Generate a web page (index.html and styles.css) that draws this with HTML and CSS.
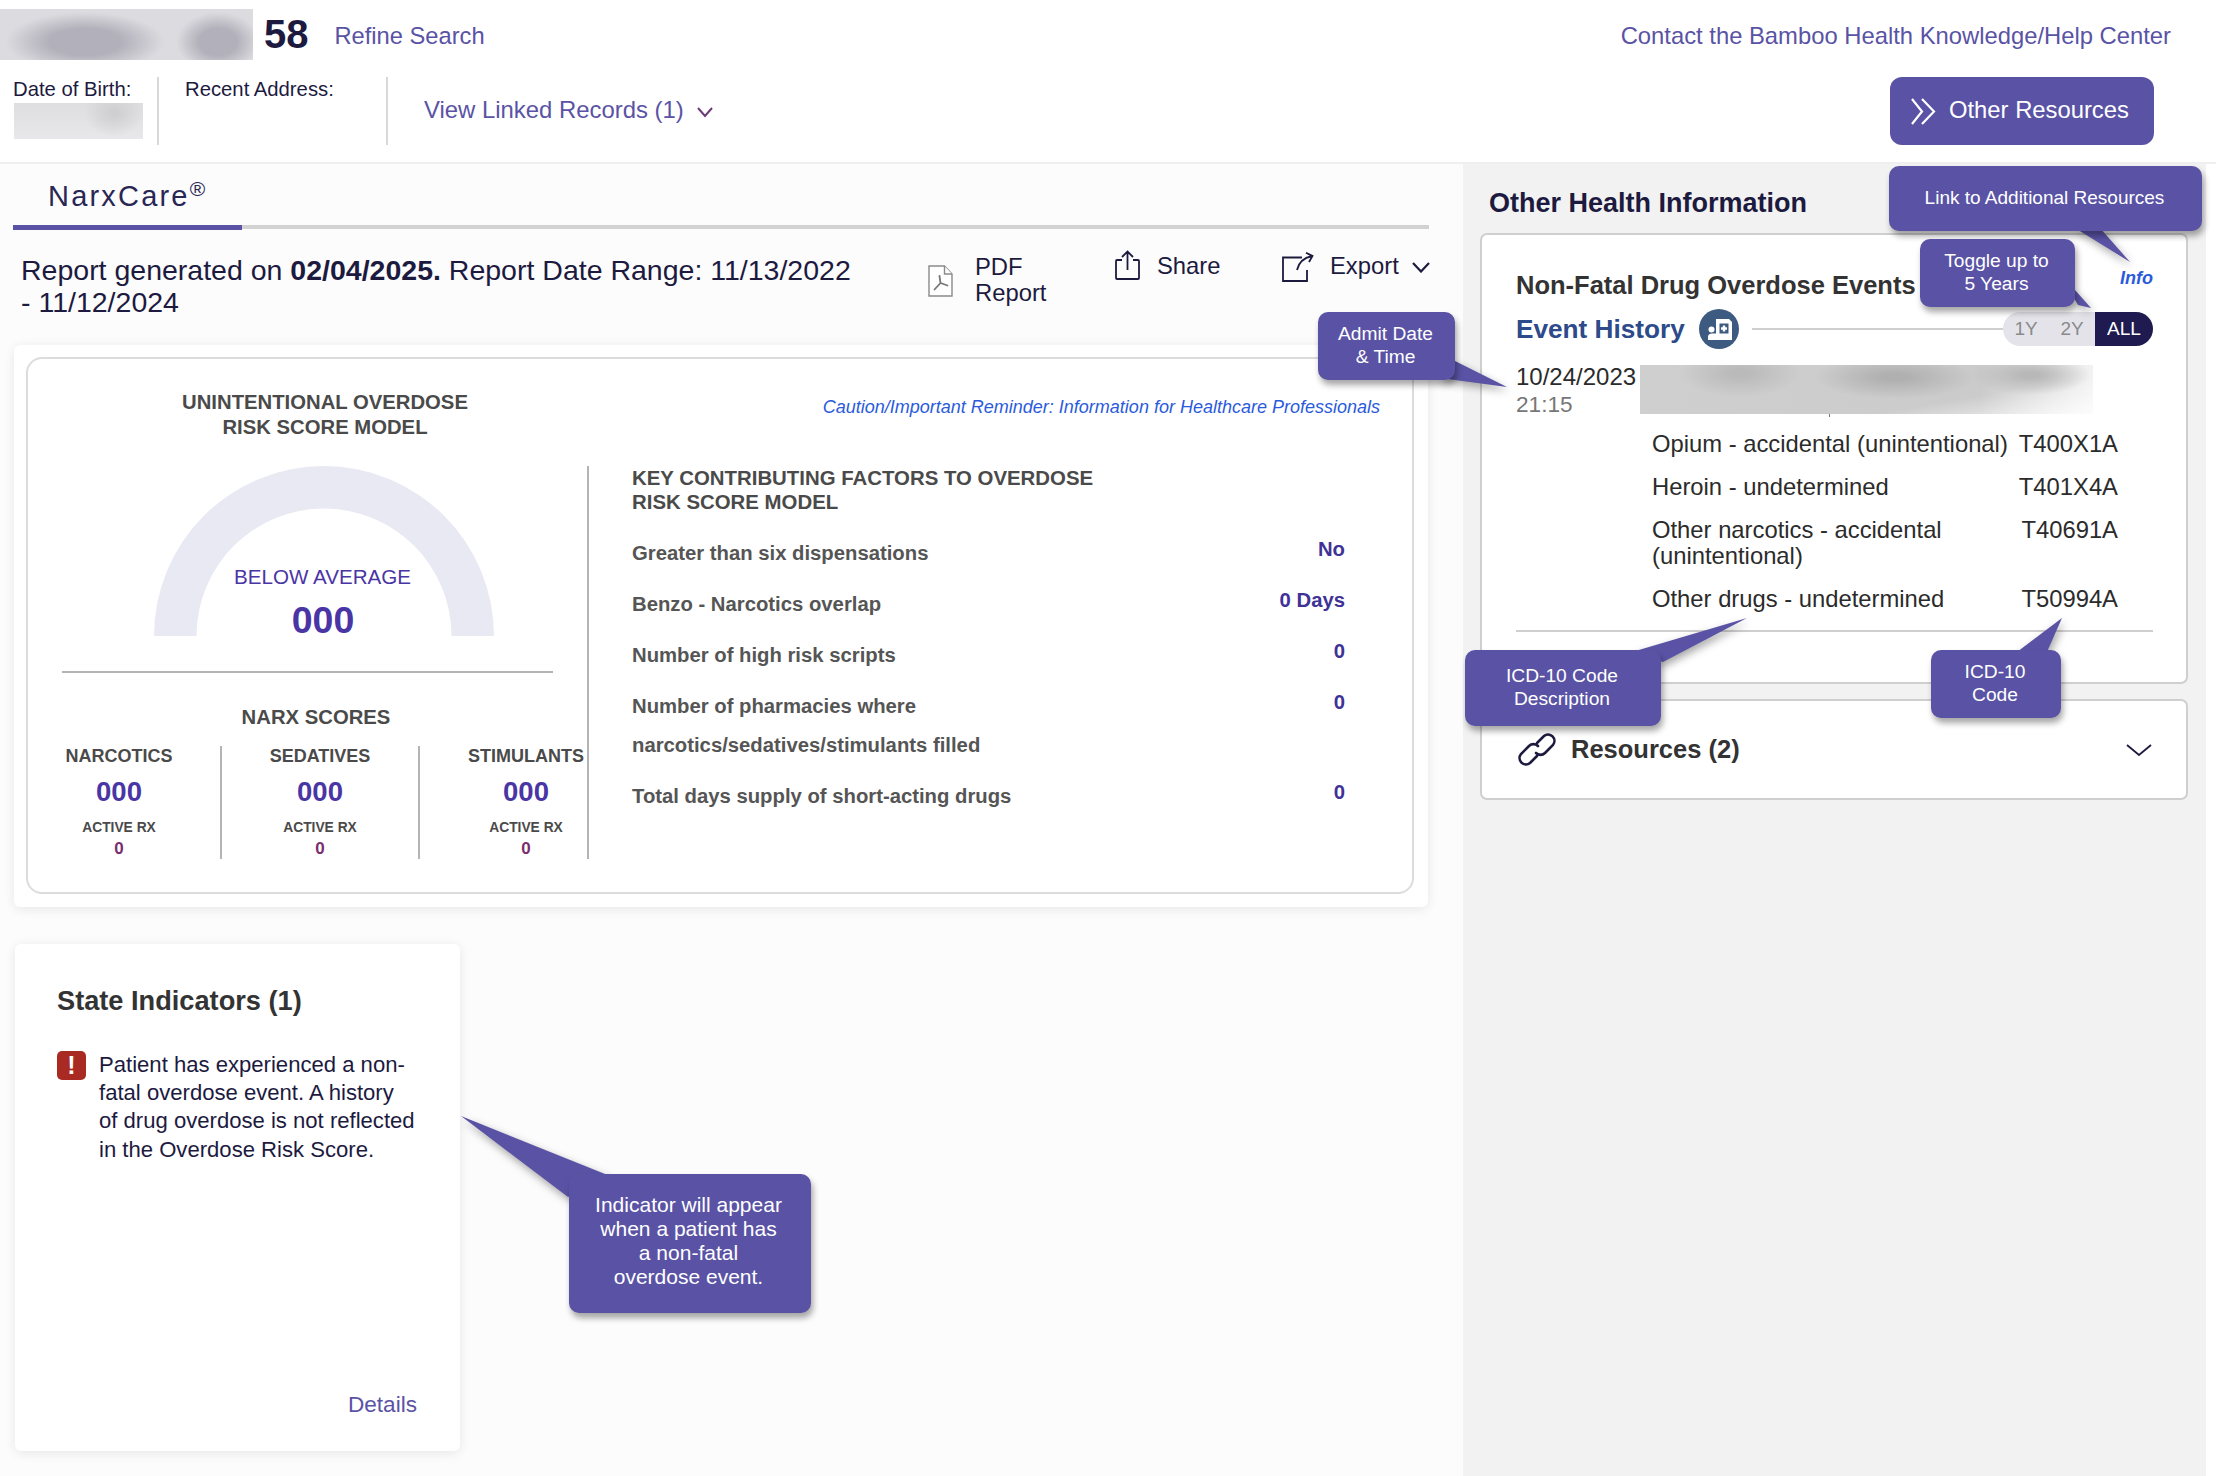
FILE: index.html
```html
<!DOCTYPE html>
<html lang="en">
<head>
<meta charset="utf-8">
<title>NarxCare</title>
<link rel="stylesheet" href="styles.css">
</head>
<body>
<div class="page">
  <header class="top">
    <div class="top-row">
      <div class="blur-name"></div>
      <span class="age">58</span>
      <a class="link refine">Refine Search</a>
      <a class="link contact">Contact the Bamboo Health Knowledge/Help Center</a>
    </div>
    <div class="info-row">
      <div class="info dob">
        <span>Date of Birth:</span>
        <div class="blur-dob"></div>
      </div>
      <div class="info addr"><span>Recent Address:</span></div>
      <a class="link linked">View Linked Records (1)
        <svg class="chev-linked" viewBox="0 0 18 12"><polyline points="2,2 9,10 16,2"/></svg>
      </a>
      <button class="res-btn">
        <svg class="dbl" viewBox="0 0 26 27"><polyline points="2,1 12,13.5 2,26"/><polyline points="12,1 24,13.5 12,26"/></svg>
        Other Resources
      </button>
    </div>
  </header>

  <main class="main">
    <section class="left">
      <div class="tabs"><span class="tab">NarxCare<sup>®</sup></span></div>
      <div class="report-row">
        <p class="report-text">Report generated on <b>02/04/2025.</b> Report Date Range: 11/13/2022 - 11/12/2024</p>
        <div class="action pdf">
          <svg class="ic-pdf" viewBox="0 0 25 32"><path class="doc" d="M1 1H16.500L24 9V31H1Z"/><path class="doc" d="M16.500 1V9H24"/><path class="acro" d="M6.500 24.500L12.500 18L11.500 11M12.500 18L19.500 20.500"/></svg>
          <span>PDF<br>Report</span>
        </div>
        <div class="action share">
          <svg class="ic-share" viewBox="0 0 26 31"><path d="M8 10H3A1 1 0 0 0 2 11V28A1 1 0 0 0 3 29H24A1 1 0 0 0 25 28V11A1 1 0 0 0 24 10H19"/><path d="M13.500 20V1.500M8 7L13.500 1.500L19 7"/></svg>
          <span>Share</span>
        </div>
        <div class="action export">
          <svg class="ic-export" viewBox="0 0 32 30"><path d="M20 5.500H1V29H25V18"/><path d="M15 18C16.500 11 21 6 30 4M24 .8L30.500 4L27 10"/></svg>
          <span>Export</span>
          <svg class="chev-export" viewBox="0 0 18 11"><polyline points="1,1 9,9.500 17,1"/></svg>
        </div>
      </div>

      <div class="risk-card">
        <div class="risk-inner">
          <div class="risk-head">
            <h2 class="risk-title">UNINTENTIONAL OVERDOSE<br>RISK SCORE MODEL</h2>
            <a class="caution">Caution/Important Reminder: Information for Healthcare Professionals</a>
          </div>
          <div class="risk-body">
            <div class="scores">
              <div class="gauge">
                <svg class="gauge-arc" viewBox="0 0 340 170"><path d="M0 170A170 170 0 0 1 340 170H297.5A127.5 127.5 0 0 0 42.5 170Z"/></svg>
                <div class="gauge-label">BELOW AVERAGE</div>
                <div class="gauge-num">000</div>
              </div>
              <div class="score-rule"></div>
              <h3 class="narx-title">NARX SCORES</h3>
              <div class="narx-cols">
                <div class="narx c1"><h4>NARCOTICS</h4><div class="n">000</div><div class="rx">ACTIVE RX</div><div class="z">0</div></div>
                <div class="narx c2"><h4>SEDATIVES</h4><div class="n">000</div><div class="rx">ACTIVE RX</div><div class="z">0</div></div>
                <div class="narx c3"><h4>STIMULANTS</h4><div class="n">000</div><div class="rx">ACTIVE RX</div><div class="z">0</div></div>
              </div>
            </div>
            <div class="factors">
              <h3 class="factors-title">KEY CONTRIBUTING FACTORS TO OVERDOSE<br>RISK SCORE MODEL</h3>
              <div class="factor"><span>Greater than six dispensations</span><b>No</b></div>
              <div class="factor"><span>Benzo - Narcotics overlap</span><b>0 Days</b></div>
              <div class="factor"><span>Number of high risk scripts</span><b>0</b></div>
              <div class="factor"><span>Number of pharmacies where<br>narcotics/sedatives/stimulants filled</span><b>0</b></div>
              <div class="factor last"><span>Total days supply of short-acting drugs</span><b>0</b></div>
            </div>
          </div>
        </div>
      </div>

      <div class="state-card">
        <h2 class="state-title">State Indicators (1)</h2>
        <div class="alert">
          <span class="alert-ic">!</span>
          <p>Patient has experienced a non-<br>fatal overdose event. A history<br>of drug overdose is not reflected<br>in the Overdose Risk Score.</p>
        </div>
        <a class="link details">Details</a>
      </div>
    </section>

    <section class="right">
      <h2 class="other-title">Other Health Information</h2>
      <div class="panel events">
        <div class="ev-title-row">
          <h3>Non-Fatal Drug Overdose Events</h3>
          <a class="info-link">Info</a>
        </div>
        <div class="ev-hist-row">
          <span class="ev-hist">Event History</span>
          <svg class="ev-ic" viewBox="0 0 40 40"><circle cx="20" cy="20" r="20"/><path class="card" d="M17 10H30L33 13V31H9V27.500C9 25.500 11 24.500 13 24.500H17Z"/><circle class="card" cx="12.500" cy="20.500" r="3"/><rect class="cross" x="20.500" y="14.500" width="9" height="10"/><path class="plus" d="M25 16.500V22.500M22 19.500H28"/></svg>
          <div class="ev-line"></div>
          <div class="toggle"><span>1Y</span><span>2Y</span><span class="on">ALL</span></div>
        </div>
        <div class="ev-date-row">
          <div class="ev-date">10/24/2023<br><span>21:15</span></div>
          <div class="blur-event"></div>
        </div>
        <div class="codes">
          <div>Opium - accidental (unintentional)</div><div class="code">T400X1A</div>
          <div>Heroin - undetermined</div><div class="code">T401X4A</div>
          <div>Other narcotics - accidental (unintentional)</div><div class="code">T40691A</div>
          <div>Other drugs - undetermined</div><div class="code">T50994A</div>
        </div>
        <div class="ev-rule"></div>
      </div>
      <div class="panel resources">
        <svg class="ic-link" viewBox="0 0 38 37"><path d="M19 12L26 5A6.400 6.400 0 0 1 35 14L27 22A6.400 6.400 0 0 1 18 22"/><path d="M19 25L12 32A6.400 6.400 0 0 1 3 23L11 15A6.400 6.400 0 0 1 20 15"/></svg>
        <span class="res-text">Resources (2)</span>
        <svg class="chev-res" viewBox="0 0 26 12"><polyline points="1,1 13,11 25,1"/></svg>
      </div>
    </section>
  </main>

  <svg class="tails" viewBox="0 0 2216 1476">
    <polygon points="2075,228 2100,228 2130,262"/>
    <polygon points="2071,293 2078,305 2091,308 2075,290"/>
    <polygon points="1453,360 1507,387 1440,378"/>
    <polygon points="1632,652 1747,618 1663,662"/>
    <polygon points="2017,652 2062,618 2047,652"/>
    <polygon points="610,1176 461,1116 568,1197"/>
  </svg>
  <div class="note n-link">Link to Additional Resources</div>
  <div class="note n-toggle">Toggle up to<br>5 Years</div>
  <div class="note n-admit">Admit Date<br>&amp; Time</div>
  <div class="note n-desc">ICD-10 Code<br>Description</div>
  <div class="note n-code">ICD-10<br>Code</div>
  <div class="note n-ind">Indicator will appear<br>when a patient has<br>a non-fatal<br>overdose event.</div>
</div>
</body>
</html>
```
FILE: styles.css
```css
* { box-sizing: border-box; }
html, body { margin: 0; padding: 0; background: #fff; }
body { font-family: "Liberation Sans", Arial, sans-serif; color: #1d1a3f; }
h2, h3, h4, p { margin: 0; }
svg { display: block; }
a { cursor: pointer; }

.page { position: relative; width: 2216px; height: 1476px; overflow: hidden; }
.link { color: #5a53a5; }

/* header */
.top { height: 164px; padding-top: 9px; border-bottom: 2px solid #efefef; }
.top-row { display: flex; align-items: center; height: 51px; }
.blur-name {
  width: 253px; height: 51px;
  background:
    radial-gradient(ellipse 80px 30px at 85px 33px, #b2b0ba 45%, transparent 100%),
    radial-gradient(ellipse 42px 30px at 218px 33px, #b2b0ba 45%, transparent 100%),
    #dcdce0;
}
.age { margin-left: 11px; font-size: 40px; font-weight: 700; line-height: 51px; }
.refine { margin-left: 26px; padding-top: 3px; font-size: 23.700px; }
.contact { margin-left: auto; margin-right: 45px; padding-top: 2px; font-size: 23.800px; }
.info-row { display: flex; margin-top: 17px; height: 68px; }
.info { font-size: 20.300px; line-height: 24px; padding-top: 0; height: 68px; border-right: 2px solid #d8d8d8; }
.dob { width: 159px; padding-left: 13px; }
.addr { width: 229px; padding-left: 26px; }
.blur-dob {
  width: 129px; height: 36px; margin: 2px 0 0 1px;
  background:
    radial-gradient(ellipse 30px 24px at 100px 10px, #cfcfd2 10%, transparent 100%),
    linear-gradient(180deg, #dedee0, #e8e8ea);
}
.linked { display: flex; align-items: center; gap: 12px; margin-left: 36px; padding-bottom: 2px; font-size: 23.900px; height: 68px; }
.chev-linked { width: 18px; height: 12px; margin-top: 3px; }
.chev-linked polyline { fill: none; stroke: #6b3a78; stroke-width: 2; }
.res-btn {
  display: flex; align-items: center; gap: 13px;
  margin-left: auto; margin-right: 62px; width: 264px; height: 68px; padding: 0 0 2px 20px;
  background: #5a53a5; border: 0; border-radius: 12px;
  color: #fff; font: 23.800px "Liberation Sans", Arial, sans-serif;
}
.dbl { width: 26px; height: 27px; margin-top: 2px; }
.dbl polyline { fill: none; stroke: #fff; stroke-width: 2.200; }

/* main */
.main { display: flex; height: 1312px; }
.left { width: 1463px; background: #fcfcfc; }
.right { width: 743px; padding: 0 18px 0 17px; background: #f2f2f2; }

.tabs { position: relative; height: 65px; margin: 0 34px 0 13px; border-bottom: 4px solid #d2d2d2; }
.tab {
  display: block; width: 229px; height: 66px; padding: 15px 0 0 35px;
  border-bottom: 5px solid #5a53a5;
  font-size: 29px; line-height: 34px; letter-spacing: 2.200px; color: #2a2755;
}
.tab sup { font-size: 21px; line-height: 0; vertical-align: 10px; letter-spacing: 0; }

.report-row { display: flex; height: 116px; padding: 25px 0 0 21px; }
.report-text { width: 845px; font-size: 28.500px; line-height: 32px; color: #1d1a3f; }
.action { display: flex; font-size: 23.800px; line-height: 25.500px; color: #1d1a3f; }
.pdf { margin-left: 62px; width: 186px; align-items: flex-start; }
.pdf span { margin-left: 22px; }
.ic-pdf { width: 25px; height: 32px; margin-top: 11px; }
.ic-pdf .doc { fill: #fff; stroke: #8a8a8a; stroke-width: 1.400; }
.ic-pdf .acro { fill: none; stroke: #777; stroke-width: 1.800; stroke-linecap: round; }
.share { width: 168px; align-items: flex-start; margin-top: -4px; }
.share span { margin: 3px 0 0 17px; }
.ic-share { width: 26px; height: 31px; }
.ic-share path, .ic-export path { fill: none; stroke: #1d1a3f; stroke-width: 1.800; }
.export { align-items: flex-start; margin-top: -2px; }
.export span { margin: 1px 0 0 16px; }
.ic-export { width: 32px; height: 30px; }
.chev-export { width: 18px; height: 11px; margin: 10px 0 0 13px; }
.chev-export polyline { fill: none; stroke: #1d1a3f; stroke-width: 2.200; }

.risk-card {
  width: 1414px; height: 562px; margin-left: 14px; padding: 12px 14px 13px 12px;
  background: #fff; border-radius: 6px; box-shadow: 0 2px 12px rgba(0,0,0,.09);
}
.risk-inner { height: 537px; border: 2px solid #dcdcdc; border-radius: 16px; }
.risk-head { position: relative; display: flex; justify-content: space-between; height: 107px; padding: 31px 32px 0 34px; }
.risk-title { width: 526px; text-align: center; font-size: 20.300px; line-height: 25px; font-weight: 700; color: #4a4a4a; }
.caution { font-size: 18px; font-style: italic; color: #2a5bdc; line-height: 24px; margin-top: 5px; }
.risk-body { display: flex; height: 393px; }

.scores { width: 561px; border-right: 2px solid #b4b4b4; }
.gauge { position: relative; width: 340px; height: 170px; margin-left: 126px; padding-top: 98px; text-align: center; }
.gauge-arc { position: absolute; left: 0; top: 0; width: 340px; height: 170px; }
.gauge-arc path { fill: #e9e9f3; }
.gauge-label { position: relative; font-size: 20.600px; line-height: 26px; color: #4a35a5; margin-left: -3px; }
.gauge-num { position: relative; font-size: 37.500px; font-weight: 700; line-height: 44px; margin-top: 8px; color: #4a35a5; margin-left: -2px; }
.score-rule { width: 491px; height: 2px; margin: 35px 0 0 34px; background: #b4b4b4; }
.narx-title { width: 576px; text-align: center; font-size: 20.300px; line-height: 26px; font-weight: 700; color: #4a4a4a; margin-top: 31px; }
.narx-cols { display: grid; grid-template-columns: 194px 198px 169px; margin-top: 16px; }
.narx { height: 113px; text-align: center; }
.c1 { padding-right: 10px; border-right: 2px solid #b4b4b4; }
.c2 { border-right: 2px solid #b4b4b4; }
.c3 { padding-left: 43px; }
.narx h4 { font-size: 18px; line-height: 22px; font-weight: 700; color: #4a4a4a; margin-top: -1px; }
.narx .n { font-size: 27.500px; line-height: 32px; font-weight: 700; color: #4a35a5; margin-top: 9px; }
.narx .rx { font-size: 13.800px; line-height: 18px; font-weight: 700; color: #4a4a4a; margin-top: 11px; }
.narx .z { font-size: 17px; line-height: 18px; font-weight: 700; color: #7a2e6e; margin-top: 3px; }

.factors { padding: 0 0 0 43px; width: 756px; }
.factors-title { font-size: 20.400px; line-height: 24px; font-weight: 700; color: #4a4a4a; margin-bottom: 20px; }
.factor { display: flex; justify-content: space-between; margin-bottom: 12px; font-size: 20.300px; line-height: 39px; color: #555; }
.factor span { font-weight: 700; }
.factor b { line-height: 31px; color: #3f3297; }
.factor.last { margin-top: 12px; }

.state-card {
  display: flex; flex-direction: column;
  width: 445px; height: 507px; margin: 37px 0 0 15px; padding: 39px 43px 32px 42px;
  background: #fff; border-radius: 6px; box-shadow: 0 2px 12px rgba(0,0,0,.09);
}
.state-title { font-size: 27.200px; line-height: 36px; font-weight: 700; color: #333; }
.alert { display: flex; margin-top: 32px; }
.alert-ic {
  width: 29px; height: 29px; flex: none; border-radius: 5px; background: #a92a22;
  color: #fff; font-size: 25px; font-weight: 700; line-height: 29px; text-align: center;
}
.alert p { margin-left: 13px; font-size: 22.100px; line-height: 28.200px; white-space: nowrap; color: #1d1a3f; }
.details { margin-top: auto; align-self: flex-end; font-size: 22.600px; line-height: 28px; }

/* right column */
.other-title { padding: 19px 0 0 9px; height: 69px; font-size: 27px; line-height: 40px; font-weight: 700; color: #1d1a3f; }
.panel { width: 708px; background: #fff; border: 2px solid #cfcfcf; border-radius: 7px; }
.events { height: 451px; padding: 34px 33px 0 34px; }
.ev-title-row { display: flex; justify-content: space-between; height: 32px; }
.ev-title-row h3 { font-size: 25.500px; line-height: 32px; font-weight: 700; color: #333; }
.info-link { font-size: 18px; line-height: 18px; font-weight: 700; font-style: italic; color: #2a5bdc; }
.ev-hist-row { display: flex; align-items: center; height: 41px; margin-top: 7px; }
.ev-hist { font-size: 26.200px; line-height: 40px; font-weight: 700; color: #2d4a8a; }
.ev-ic { width: 40px; height: 40px; margin-left: 14px; }
.ev-ic circle { fill: #3d5a80; }
.ev-ic .card { fill: #fff; }
.ev-ic .cross { fill: #3d5a80; }
.ev-ic .plus { fill: none; stroke: #fff; stroke-width: 2.400; }
.ev-line { flex: 1; height: 2px; margin-left: 13px; background: #cfcfcf; }
.toggle { display: flex; width: 150px; height: 34px; border-radius: 17px; overflow: hidden; background: #e4e3ea; font-size: 19px; line-height: 34px; color: #8a8a8a; }
.toggle span { width: 46px; text-align: center; }
.toggle .on { width: 58px; background: #1f1a4f; color: #fff; }
.ev-date-row { display: flex; margin-top: 14px; }
.ev-date { width: 124px; font-size: 24px; line-height: 27px; color: #2b2b2b; }
.ev-date span { font-size: 22.600px; color: #777; }
.blur-event {
  position: relative;
  width: 453px; height: 49px; margin-top: 2px;
  background:
    radial-gradient(ellipse 80px 22px at 255px 12px, #b0b0b0 15%, transparent 100%),
    radial-gradient(ellipse 60px 24px at 100px 8px, #bababa 15%, transparent 100%),
    radial-gradient(ellipse 60px 20px at 390px 10px, #b8b8b8 15%, transparent 100%),
    linear-gradient(170deg, rgba(255,255,255,0) 70%, rgba(255,255,255,.8) 100%),
    linear-gradient(90deg, #cfcfcf 0, #cbcbcb 75%, #f2f2f2 100%);
}
.blur-event::after { content: ""; position: absolute; left: 189px; bottom: -3px; width: 1px; height: 3px; background: #777; }
.codes { display: grid; grid-template-columns: 360px 106px; row-gap: 17px; margin: 13px 0 0 136px; font-size: 23.800px; line-height: 26px; color: #2b2b2b; }
.code { text-align: right; }
.ev-rule { height: 2px; margin-top: 18px; background: #cfcfcf; }
.resources { display: flex; align-items: center; height: 101px; margin-top: 15px; padding: 0 34px 0 36px; }
.ic-link { width: 38px; height: 37px; }
.ic-link path { fill: none; stroke: #1d1a3f; stroke-width: 2.600; stroke-linecap: round; }
.res-text { margin-left: 15px; font-size: 25.500px; font-weight: 700; color: #333; }
.chev-res { width: 26px; height: 12px; margin-left: auto; }
.chev-res polyline { fill: none; stroke: #1d1a3f; stroke-width: 1.800; }

/* annotation callouts */
.tails { position: absolute; left: 0; top: 0; width: 2216px; height: 1476px; pointer-events: none; filter: drop-shadow(2px 4px 4px rgba(0,0,0,.35)); }
.tails polygon { fill: #5a53a5; }
.note {
  position: absolute; display: flex; align-items: center; justify-content: center; text-align: center;
  background: #5a53a5; color: #fff; border-radius: 10px;
  box-shadow: 2px 5px 6px rgba(0,0,0,.35);
  font-size: 19.200px; line-height: 22.500px; padding: 0 2px 1px 0;
}
.n-link { left: 1889px; top: 166px; width: 313px; height: 65px; font-size: 19px; }
.n-toggle { left: 1920px; top: 239px; width: 155px; height: 68px; }
.n-admit { left: 1318px; top: 312px; width: 137px; height: 68px; }
.n-desc { left: 1465px; top: 650px; width: 196px; height: 76px; }
.n-code { left: 1931px; top: 650px; width: 130px; height: 68px; }
.n-ind { left: 569px; top: 1174px; width: 242px; height: 139px; padding: 0 3px 5px 0; font-size: 21px; line-height: 24px; }
```
